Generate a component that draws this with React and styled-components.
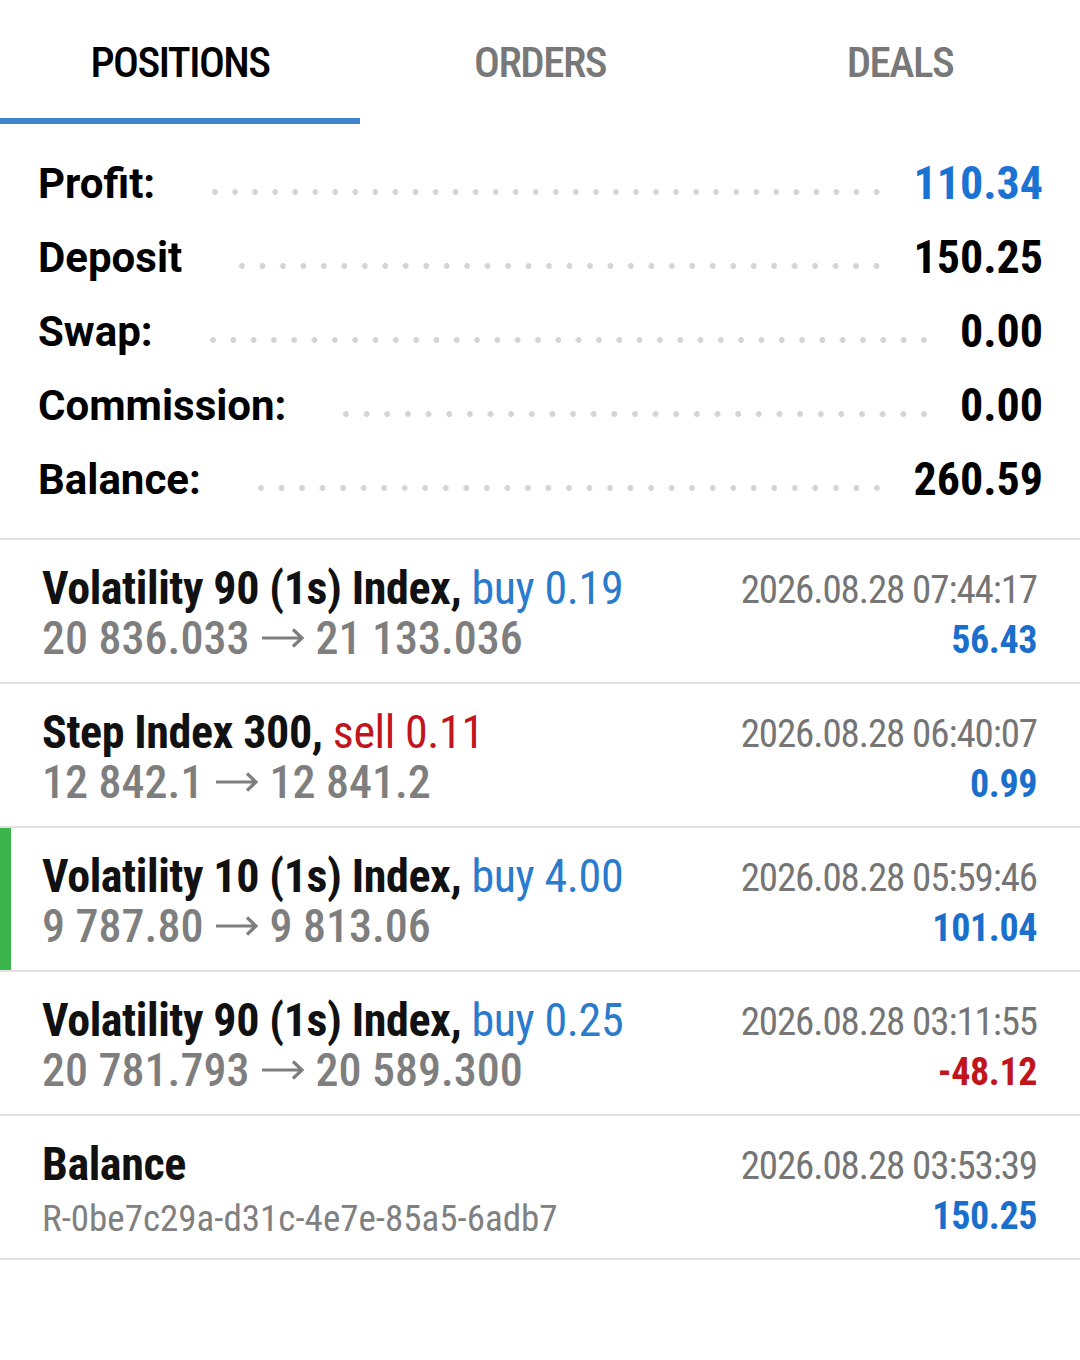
import React from 'react';
import styled, {createGlobalStyle} from 'styled-components';

const GlobalStyle = createGlobalStyle`
  body {
    margin: 0;
    background: #fff;
    font-family: "Roboto Condensed", Roboto, "Liberation Sans", sans-serif;
    font-stretch: condensed;
  }
`;

const summary = [
    {label: 'Profit:', value: '110.34', blue: true},
    {label: 'Deposit', value: '150.25'},
    {label: 'Swap:', value: '0.00'},
    {label: 'Commission:', value: '0.00'},
    {label: 'Balance:', value: '260.59'},
];

const trades = [
    {symbol: 'Volatility 90 (1s) Index,', side: 'buy', volume: '0.19', open: '20 836.033', close: '21 133.036', time: '2026.08.28 07:44:17', profit: '56.43'},
    {symbol: 'Step Index 300,', side: 'sell', volume: '0.11', open: '12 842.1', close: '12 841.2', time: '2026.08.28 06:40:07', profit: '0.99'},
    {symbol: 'Volatility 10 (1s) Index,', side: 'buy', volume: '4.00', open: '9 787.80', close: '9 813.06', time: '2026.08.28 05:59:46', profit: '101.04', active: true},
    {symbol: 'Volatility 90 (1s) Index,', side: 'buy', volume: '0.25', open: '20 781.793', close: '20 589.300', time: '2026.08.28 03:11:55', profit: '-48.12'},
];

const ArrowIcon = () => (
    <Arrow width="44" height="22" viewBox="0 0 44 22">
        <path d="M1 11H41M32 2.5L41 11L32 19.5" fill="none" stroke="#7e7e7e" strokeWidth="3.2"/>
    </Arrow>
)

const App = () => {
    return (
        <Page>
            <GlobalStyle/>
            <Tabs>
                <Tab active>POSITIONS</Tab>
                <Tab>ORDERS</Tab>
                <Tab>DEALS</Tab>
            </Tabs>
            <Summary>
                {summary.map(row => (
                    <SummaryRow key={row.label}>
                        <Label>{row.label}</Label>
                        <Dots/>
                        <Value blue={row.blue}>{row.value}</Value>
                    </SummaryRow>
                ))}
            </Summary>
            <List>
                {trades.map(t => (
                    <Row key={t.time} active={t.active}>
                        <Left>
                            <Title>
                                {t.symbol} <Side sell={t.side === 'sell'}>{t.side} {t.volume}</Side>
                            </Title>
                            <Prices>
                                {t.open}<ArrowIcon/>{t.close}
                            </Prices>
                        </Left>
                        <Right>
                            <Time>{t.time}</Time>
                            <Amount negative={t.profit.startsWith('-')}>{t.profit}</Amount>
                        </Right>
                    </Row>
                ))}
                <Row>
                    <Left>
                        <Title>Balance</Title>
                        <Comment>R-0be7c29a-d31c-4e7e-85a5-6adb7</Comment>
                    </Left>
                    <Right>
                        <Time>2026.08.28 03:53:39</Time>
                        <Amount>150.25</Amount>
                    </Right>
                </Row>
            </List>
        </Page>
    )
}

const Page = styled.div`
  width: 1080px;
  min-height: 1360px;
  background: #fff;
`;

const Tabs = styled.div`
  display: grid;
  grid-template-columns: repeat(3, 1fr);
  height: 124px;
`;

const Tab = styled.div`
  display: flex;
  align-items: center;
  justify-content: center;
  padding-top: 6px;
  font-size: 43px;
  letter-spacing: -1.5px;
  font-weight: 500;
  color: ${p => p.active ? '#000' : '#787878'};
  border-bottom: 6px solid ${p => p.active ? '#3f85cc' : 'transparent'};
`;

const Summary = styled.div`
  padding: 22px 37px 22px 38px;
  border-bottom: 2px solid #e2e2e2;
`;

const SummaryRow = styled.div`
  display: flex;
  align-items: center;
  height: 74px;
`;

const Label = styled.div`
  font-family: Roboto, "Liberation Sans", sans-serif;
  font-stretch: normal;
  font-size: 42px;
  font-weight: 700;
  color: #000;
`;

const Dots = styled.div`
  flex: 1;
  height: 8px;
  margin: 18px 26px 0 50px;
  background-image: radial-gradient(circle, #d4d4d4 2.6px, transparent 3.2px);
  background-size: 20px 8px;
  background-repeat: space no-repeat;
`;

const Value = styled.div`
  font-size: 46px;
  font-weight: 700;
  color: ${p => p.blue ? '#1a73d2' : '#000'};
`;

const List = styled.div``;

const Row = styled.div`
  display: flex;
  justify-content: space-between;
  height: 144px;
  box-sizing: border-box;
  padding: 23px 43px 0 42px;
  border-bottom: 2px solid #e2e2e2;
  box-shadow: ${p => p.active ? 'inset 11px 0 0 #3cb44c' : 'none'};
`;

const Left = styled.div`
  display: flex;
  flex-direction: column;
`;

const Right = styled.div`
  display: flex;
  flex-direction: column;
  align-items: flex-end;
  padding-top: 2px;
`;

const Title = styled.div`
  font-size: 46px;
  line-height: 50px;
  letter-spacing: -0.4px;
  font-weight: 700;
  color: #111;
  white-space: nowrap;
`;

const Side = styled.span`
  font-weight: 400;
  color: ${p => p.sell ? '#c0151c' : '#2b7bcc'};
`;

const Prices = styled.div`
  font-size: 46px;
  line-height: 50px;
  font-weight: 500;
  color: #7e7e7e;
  white-space: nowrap;
`;

const Arrow = styled.svg`
  display: inline-block;
  vertical-align: 5px;
  margin: 0 10px 0 12px;
`;

const Comment = styled.div`
  font-size: 37px;
  line-height: 50px;
  margin-top: 5px;
  font-weight: 400;
  color: #808080;
`;

const Time = styled.div`
  font-size: 39px;
  line-height: 50px;
  letter-spacing: -1.1px;
  font-weight: 400;
  color: #757575;
`;

const Amount = styled.div`
  font-size: 38px;
  line-height: 50px;
  letter-spacing: -0.4px;
  font-weight: 700;
  color: ${p => p.negative ? '#c0151c' : '#1a6fcc'};
`;

export default App;
